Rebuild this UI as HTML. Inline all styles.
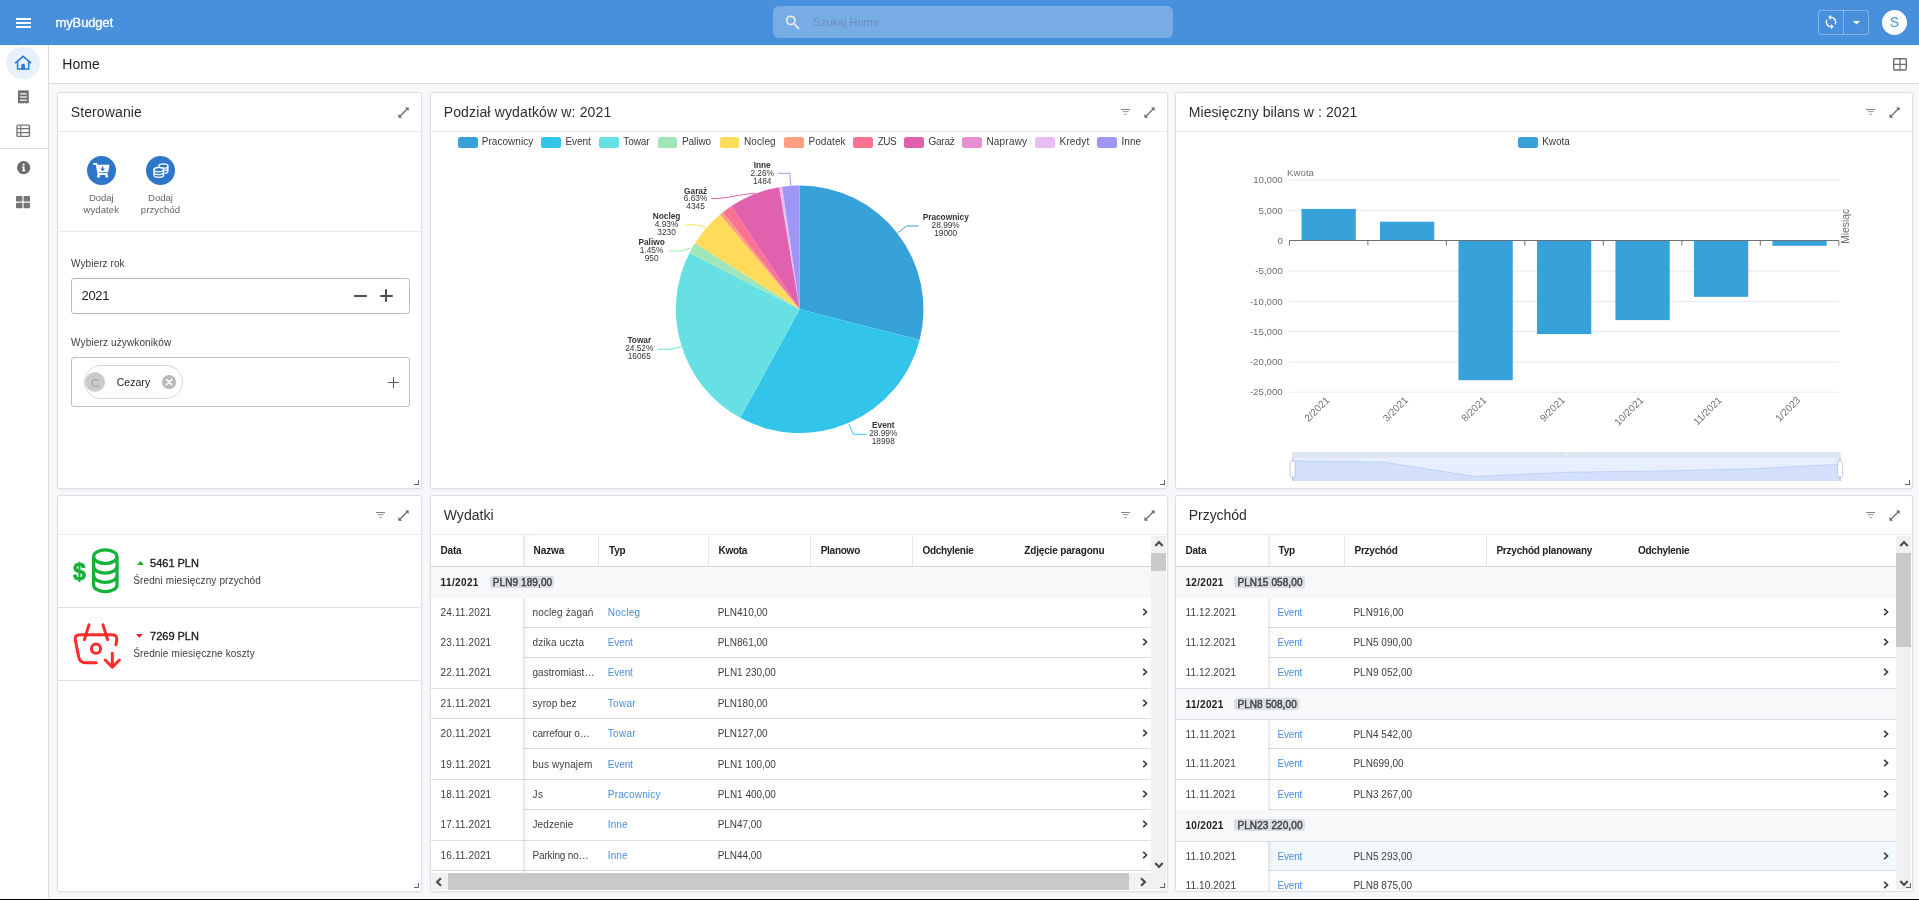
<!DOCTYPE html><html lang="pl"><head><meta charset="utf-8"><title>myBudget - Home</title><style>
*{box-sizing:border-box;margin:0;padding:0}
html,body{width:1919px;height:900px;overflow:hidden;background:#f7f8fa;font-family:"Liberation Sans",sans-serif;}
.t{position:absolute;white-space:nowrap;}
.a{position:absolute;}
.card{position:absolute;background:#fff;border:1px solid #dcdfe5;border-radius:2.5px;box-shadow:0 1px 3px rgba(60,64,80,0.07);}
.hl{position:absolute;height:1px;background:#ebecef;}
.vl{position:absolute;width:1px;background:#e4e6ea;}
svg{position:absolute;overflow:visible;}
.rs{position:absolute;width:5px;height:5px;border-right:1px solid #5f6368;border-bottom:1px solid #5f6368;}
</style></head><body><div id="root" style="position:absolute;left:0;top:0;width:1919px;height:900px;overflow:hidden;will-change:transform;">
<div class="a" style="left:0;top:0;width:1919px;height:45px;background:#4990dc;border-bottom:1px solid #4189da;"></div>
<div class="a" style="left:16px;top:18px;width:15px;height:2px;background:#fff;"></div>
<div class="a" style="left:16px;top:22px;width:15px;height:2px;background:#fff;"></div>
<div class="a" style="left:16px;top:26px;width:15px;height:2px;background:#fff;"></div>
<span class="t" style="top:16.00px;font-size:13px;line-height:13px;color:#fff;letter-spacing:-0.154px;left:55.60px;-webkit-text-stroke:0.3px #fff;">myBudget</span>
<div class="a" style="left:773px;top:6px;width:400px;height:31.6px;border-radius:6px;background:rgba(255,255,255,0.26);"></div>
<svg style="left:783px;top:13px" width="18" height="18" viewBox="0 0 18 18"><circle cx="7.8" cy="7.4" r="4.1" fill="none" stroke="#e9e9e6" stroke-width="1.8"/><path d="M10.9 10.6 L15.6 15.4" stroke="#e9e9e6" stroke-width="1.9" stroke-linecap="round"/></svg>
<span class="t" style="top:17.00px;font-size:11px;line-height:11px;color:#6d8fbd;letter-spacing:0.008px;left:813.30px;">Szukaj Home</span>
<div class="a" style="left:1818px;top:10px;width:51px;height:25px;border:1px solid rgba(255,255,255,0.32);border-radius:3px;"></div>
<div class="a" style="left:1843px;top:10px;width:1px;height:25px;background:rgba(255,255,255,0.32);"></div>
<svg style="left:1822.9px;top:14.2px" width="16" height="16" viewBox="0 0 24 24"><path fill="#fff" d="M12 4V1L8 5l4 4V6c3.31 0 6 2.69 6 6 0 1.01-.25 1.97-.7 2.8l1.46 1.46C19.54 15.03 20 13.57 20 12c0-4.42-3.58-8-8-8zm0 14c-3.31 0-6-2.69-6-6 0-1.01.25-1.97.7-2.8L5.24 7.74C4.46 8.97 4 10.43 4 12c0 4.42 3.58 8 8 8v3l4-4-4-4v3z"/></svg>
<svg style="left:1853px;top:20.5px" width="7" height="4" viewBox="0 0 7 4"><path d="M0 0 H7 L3.5 3.6 Z" fill="#fff"/></svg>
<div class="a" style="left:1882px;top:10px;width:25px;height:25px;border-radius:50%;background:#fff;"></div>
<span class="t" style="top:15.00px;font-size:14px;line-height:14px;color:#4990dc;left:1889.73px;">S</span>
<div class="a" style="left:0;top:45px;width:49px;height:854px;background:#fff;border-right:1px solid #d8dade;"></div>
<div class="a" style="left:5.8px;top:46.9px;width:34px;height:32.4px;border-radius:50%;background:#e8f0fb;"></div>
<svg style="left:0;top:0" width="60" height="160" viewBox="0 0 60 160"><g transform="translate(0 0.5)"><path d="M15.7 62.1 L23.1 55.9 L30.5 62.1" fill="none" stroke="#2e7bd6" stroke-width="1.7" stroke-linejoin="miter" stroke-linecap="round"/><path d="M17.6 61 V68.6 H28.7 V61" fill="none" stroke="#2e7bd6" stroke-width="1.5"/><path d="M21.2 69.2 V64.9 a1.9 1.6 0 0 1 3.8 0 V69.2 Z" fill="#2e7bd6"/></g><path d="M18 89.9 l1.35 0.9 l1.35 -0.9 l1.35 0.9 l1.35 -0.9 l1.35 0.9 l1.35 -0.9 l1.35 0.9 l1.3 -0.9 V103.7 l-1.3 -0.9 l-1.35 0.9 l-1.35 -0.9 l-1.35 0.9 l-1.35 -0.9 l-1.35 0.9 l-1.35 -0.9 l-1.35 0.9 Z" fill="#707070"/><rect x="19.9" y="93.3" width="6.9" height="1.2" fill="#fff"/><rect x="19.9" y="96.4" width="6.9" height="1.2" fill="#fff"/><rect x="19.9" y="99.6" width="6.9" height="1.2" fill="#fff"/><rect x="17" y="125.1" width="12.4" height="11.3" rx="1.2" fill="none" stroke="#757575" stroke-width="1.4"/><path d="M17 128.7 H29.4 M17 132.6 H29.4 M20.7 125.1 V136.4" stroke="#757575" stroke-width="1.2" fill="none"/></svg>
<div class="a" style="left:0;top:148px;width:48px;height:1px;background:#dcdee2;"></div>
<svg style="left:16.5px;top:161.1px" width="13.3" height="13.3" viewBox="0 0 14 14"><circle cx="7" cy="7" r="7" fill="#6b6b6b"/><rect x="6.1" y="6" width="1.9" height="4.6" fill="#fff"/><rect x="5.3" y="6" width="2" height="1.1" fill="#fff"/><rect x="5.3" y="9.7" width="3.6" height="1.1" fill="#fff"/><circle cx="7" cy="3.9" r="1.15" fill="#fff"/></svg>
<svg style="left:16.2px;top:195.5px" width="14" height="12.3" viewBox="0 0 15 13" preserveAspectRatio="none"><rect x="0" y="0" width="6.9" height="5.9" rx="0.8" fill="#757575"/><rect x="8.1" y="0" width="6.9" height="5.9" rx="0.8" fill="#757575"/><rect x="0" y="7.1" width="6.9" height="5.9" rx="0.8" fill="#757575"/><rect x="8.1" y="7.1" width="6.9" height="5.9" rx="0.8" fill="#757575"/></svg>
<div class="a" style="left:49px;top:45px;width:1870px;height:39px;background:#fff;border-bottom:1px solid #d8dbe0;"></div>
<span class="t" style="top:57.00px;font-size:14px;line-height:14px;color:#202124;letter-spacing:0.063px;left:62.30px;">Home</span>
<svg style="left:1893px;top:58.3px" width="14" height="13" viewBox="0 0 14 13"><rect x="0.7" y="0.7" width="12.6" height="11.3" rx="1" fill="none" stroke="#6f6f6f" stroke-width="1.4"/><path d="M7 0.7 V12 M0.7 6.35 H13.3" stroke="#6f6f6f" stroke-width="1.3"/></svg>
<div class="card" style="left:57px;top:92px;width:365px;height:397px;"></div>
<div class="hl" style="left:58px;top:131px;width:363px;"></div>
<span class="t" style="top:105.00px;font-size:14px;line-height:14px;color:#2b2f33;letter-spacing:0.126px;left:70.70px;">Sterowanie</span>
<svg style="left:397.6px;top:106.9px" width="11.1" height="11.1" viewBox="0 0 10.6 10.6"><path d="M1.8 8.8 L8.8 1.8" stroke="#666" stroke-width="1.3" fill="none"/><path d="M6.7 0.4 H10.2 V3.9 Z" fill="#666"/><path d="M0.4 6.7 V10.2 H3.9 Z" fill="#666"/></svg>
<div class="rs" style="left:414px;top:480px;"></div>
<div class="card" style="left:430px;top:92px;width:738px;height:397px;"></div>
<div class="hl" style="left:431px;top:131px;width:736px;"></div>
<span class="t" style="top:105.00px;font-size:14px;line-height:14px;color:#2b2f33;letter-spacing:0.146px;left:443.70px;">Podział wydatków w: 2021</span>
<svg style="left:1143.6px;top:106.9px" width="11.1" height="11.1" viewBox="0 0 10.6 10.6"><path d="M1.8 8.8 L8.8 1.8" stroke="#666" stroke-width="1.3" fill="none"/><path d="M6.7 0.4 H10.2 V3.9 Z" fill="#666"/><path d="M0.4 6.7 V10.2 H3.9 Z" fill="#666"/></svg>
<svg style="left:1121.1px;top:108.95px" width="10" height="7" viewBox="0 0 10 7"><path d="M0.1 0.5 H9 " stroke="#7a7a7a" stroke-width="0.95" fill="none"/><path d="M1.8 2.65 H7.6" stroke="#8a8a8a" stroke-width="0.95" fill="none"/><path d="M3.1 5.35 H5.9" stroke="#999" stroke-width="0.95" fill="none"/></svg>
<div class="rs" style="left:1160px;top:480px;"></div>
<div class="card" style="left:1175px;top:92px;width:738px;height:397px;"></div>
<div class="hl" style="left:1176px;top:131px;width:736px;"></div>
<span class="t" style="top:105.00px;font-size:14px;line-height:14px;color:#2b2f33;letter-spacing:0.084px;left:1188.70px;">Miesięczny bilans w : 2021</span>
<svg style="left:1888.6px;top:106.9px" width="11.1" height="11.1" viewBox="0 0 10.6 10.6"><path d="M1.8 8.8 L8.8 1.8" stroke="#666" stroke-width="1.3" fill="none"/><path d="M6.7 0.4 H10.2 V3.9 Z" fill="#666"/><path d="M0.4 6.7 V10.2 H3.9 Z" fill="#666"/></svg>
<svg style="left:1866.1px;top:108.95px" width="10" height="7" viewBox="0 0 10 7"><path d="M0.1 0.5 H9 " stroke="#7a7a7a" stroke-width="0.95" fill="none"/><path d="M1.8 2.65 H7.6" stroke="#8a8a8a" stroke-width="0.95" fill="none"/><path d="M3.1 5.35 H5.9" stroke="#999" stroke-width="0.95" fill="none"/></svg>
<div class="rs" style="left:1905px;top:480px;"></div>
<div class="card" style="left:57px;top:495px;width:365px;height:397px;"></div>
<div class="hl" style="left:58px;top:534px;width:363px;"></div>
<svg style="left:397.6px;top:509.9px" width="11.1" height="11.1" viewBox="0 0 10.6 10.6"><path d="M1.8 8.8 L8.8 1.8" stroke="#666" stroke-width="1.3" fill="none"/><path d="M6.7 0.4 H10.2 V3.9 Z" fill="#666"/><path d="M0.4 6.7 V10.2 H3.9 Z" fill="#666"/></svg>
<svg style="left:376.2px;top:511.95px" width="10" height="7" viewBox="0 0 10 7"><path d="M0.1 0.5 H9 " stroke="#7a7a7a" stroke-width="0.95" fill="none"/><path d="M1.8 2.65 H7.6" stroke="#8a8a8a" stroke-width="0.95" fill="none"/><path d="M3.1 5.35 H5.9" stroke="#999" stroke-width="0.95" fill="none"/></svg>
<div class="rs" style="left:414px;top:883px;"></div>
<div class="card" style="left:430px;top:495px;width:738px;height:397px;"></div>
<div class="hl" style="left:431px;top:534px;width:736px;"></div>
<span class="t" style="top:508.00px;font-size:14px;line-height:14px;color:#2b2f33;letter-spacing:0.062px;left:443.70px;">Wydatki</span>
<svg style="left:1143.6px;top:509.9px" width="11.1" height="11.1" viewBox="0 0 10.6 10.6"><path d="M1.8 8.8 L8.8 1.8" stroke="#666" stroke-width="1.3" fill="none"/><path d="M6.7 0.4 H10.2 V3.9 Z" fill="#666"/><path d="M0.4 6.7 V10.2 H3.9 Z" fill="#666"/></svg>
<svg style="left:1121.1px;top:511.95px" width="10" height="7" viewBox="0 0 10 7"><path d="M0.1 0.5 H9 " stroke="#7a7a7a" stroke-width="0.95" fill="none"/><path d="M1.8 2.65 H7.6" stroke="#8a8a8a" stroke-width="0.95" fill="none"/><path d="M3.1 5.35 H5.9" stroke="#999" stroke-width="0.95" fill="none"/></svg>
<div class="rs" style="left:1160px;top:883px;"></div>
<div class="card" style="left:1175px;top:495px;width:738px;height:397px;"></div>
<div class="hl" style="left:1176px;top:534px;width:736px;"></div>
<span class="t" style="top:508.00px;font-size:14px;line-height:14px;color:#2b2f33;letter-spacing:-0.020px;left:1188.70px;">Przychód</span>
<svg style="left:1888.6px;top:509.9px" width="11.1" height="11.1" viewBox="0 0 10.6 10.6"><path d="M1.8 8.8 L8.8 1.8" stroke="#666" stroke-width="1.3" fill="none"/><path d="M6.7 0.4 H10.2 V3.9 Z" fill="#666"/><path d="M0.4 6.7 V10.2 H3.9 Z" fill="#666"/></svg>
<svg style="left:1866.1px;top:511.95px" width="10" height="7" viewBox="0 0 10 7"><path d="M0.1 0.5 H9 " stroke="#7a7a7a" stroke-width="0.95" fill="none"/><path d="M1.8 2.65 H7.6" stroke="#8a8a8a" stroke-width="0.95" fill="none"/><path d="M3.1 5.35 H5.9" stroke="#999" stroke-width="0.95" fill="none"/></svg>
<div class="rs" style="left:1905px;top:883px;"></div>
<div class="a" style="left:87.0px;top:156px;width:29px;height:29px;border-radius:50%;background:#2e77c8;"></div>
<div class="a" style="left:146.0px;top:156px;width:29px;height:29px;border-radius:50%;background:#2e77c8;"></div>
<svg style="left:92.9px;top:163.1px" width="16.5" height="14.7" viewBox="0 0 576 512"><path fill="#fff" d="M504.717 320H211.572l6.545 32h268.418c15.401 0 26.816 14.301 23.403 29.319l-5.517 24.276C523.112 414.668 536 433.828 536 456c0 31.202-25.519 56.444-56.824 55.994-29.823-.429-54.35-24.631-55.155-54.447-.44-16.287 6.085-31.049 16.803-41.548H231.176C241.553 426.165 248 440.326 248 456c0 31.813-26.528 57.431-58.67 55.938-28.54-1.325-51.751-24.385-53.251-52.917-1.158-22.034 10.436-41.455 28.051-51.586L93.883 64H24C10.745 64 0 53.255 0 40V24C0 10.745 10.745 0 24 0h102.529c11.401 0 21.228 8.021 23.513 19.19L159.208 64H551.99c15.401 0 26.816 14.301 23.403 29.319l-47.273 208C525.637 312.246 515.923 320 504.717 320zM403.029 192H360v-60c0-6.627-5.373-12-12-12h-24c-6.627 0-12 5.373-12 12v60h-43.029c-10.691 0-16.045 12.926-8.485 20.485l67.029 67.029c4.686 4.686 12.284 4.686 16.971 0l67.029-67.029c7.559-7.559 2.205-20.485-8.486-20.485z"/></svg>
<svg style="left:152.9px;top:162.6px" width="16" height="15" viewBox="0 0 16 15"><g fill="none" stroke="#fff" stroke-width="1.3"><ellipse cx="10.3" cy="3" rx="4.6" ry="2.2"/><path d="M14.9 3 V8.2 c0 1.2 -1.6 2 -3.3 2.2 M14.9 5.6 c0 1 -1.4 1.8 -3.2 2.1"/><ellipse cx="5.8" cy="6.6" rx="4.8" ry="2.3" fill="#2e77c8"/><path d="M1 6.6 V12 c0 1.3 2.1 2.3 4.8 2.3 s4.8 -1 4.8 -2.3 V6.6"  fill="#2e77c8"/><ellipse cx="5.8" cy="6.6" rx="4.8" ry="2.3"/><path d="M1 9.3 c0 1.3 2.1 2.3 4.8 2.3 s4.8 -1 4.8 -2.3"/></g></svg>
<span class="t" style="top:193.00px;font-size:9.5px;line-height:9.5px;color:#5f6368;left:88.90px;">Dodaj</span>
<span class="t" style="top:205.00px;font-size:9.5px;line-height:9.5px;color:#5f6368;letter-spacing:0.107px;left:83.50px;">wydatek</span>
<span class="t" style="top:193.00px;font-size:9.5px;line-height:9.5px;color:#5f6368;left:148.10px;">Dodaj</span>
<span class="t" style="top:205.00px;font-size:9.5px;line-height:9.5px;color:#5f6368;letter-spacing:0.106px;left:140.80px;">przychód</span>
<div class="hl" style="left:58px;top:231px;width:363px;"></div>
<span class="t" style="top:259.00px;font-size:10px;line-height:10px;color:#3c4043;letter-spacing:0.073px;left:71.10px;">Wybierz rok</span>
<div class="a" style="left:71px;top:278px;width:339px;height:36px;border:1px solid #b4bac4;border-radius:3px;background:#fff;"></div>
<span class="t" style="top:289.00px;font-size:13px;line-height:13px;color:#202124;letter-spacing:-0.380px;left:81.60px;">2021</span>
<div class="a" style="left:353.5px;top:294.8px;width:13px;height:1.9px;background:#4a4f55;border-radius:1px;"></div>
<div class="a" style="left:379.7px;top:294.8px;width:13px;height:1.9px;background:#4a4f55;border-radius:1px;"></div>
<div class="a" style="left:385.2px;top:289.3px;width:1.9px;height:13px;background:#4a4f55;border-radius:1px;"></div>
<span class="t" style="top:338.00px;font-size:10px;line-height:10px;color:#3c4043;letter-spacing:0.131px;left:71.10px;">Wybierz używkoników</span>
<div class="a" style="left:71px;top:357px;width:339px;height:50px;border:1px solid #bdbfc4;border-radius:3px;background:#fff;"></div>
<div class="a" style="left:84px;top:365px;width:99px;height:34px;border:1px solid #d4d8e0;border-radius:17px;background:#fff;"></div>
<div class="a" style="left:85.2px;top:372.4px;width:20px;height:20px;border-radius:50%;background:#cbcbcb;"></div>
<span class="t" style="top:378.00px;font-size:11.5px;line-height:11.5px;color:#9c9c9c;left:91.05px;">C</span>
<span class="t" style="top:377.00px;font-size:10.5px;line-height:10.5px;color:#202124;letter-spacing:0.040px;left:116.70px;">Cezary</span>
<svg style="left:161.8px;top:374.6px" width="14.2" height="14.2" viewBox="0 0 14 14"><circle cx="7" cy="7" r="7" fill="#b9b9b9"/><path d="M4.3 4.3 L9.7 9.7 M9.7 4.3 L4.3 9.7" stroke="#fff" stroke-width="1.5" stroke-linecap="round"/></svg>
<div class="a" style="left:387.8px;top:381.8px;width:11.4px;height:1.1px;background:#5a5a5a;"></div>
<div class="a" style="left:392.95px;top:376.6px;width:1.1px;height:11.4px;background:#5a5a5a;"></div>
<div class="hl" style="left:58px;top:607px;width:363px;background:#dfe1e5"></div>
<div class="hl" style="left:58px;top:680px;width:363px;background:#dfe1e5"></div>
<span class="t" style="top:561.00px;font-size:23px;line-height:23px;color:#12b23b;font-weight:bold;left:73.00px;-webkit-text-stroke:0.7px #12b23b;">$</span>
<svg style="left:0;top:0" width="200" height="700" viewBox="0 0 200 700"><g fill="none" stroke="#12b23b" stroke-width="3.2"><ellipse cx="105.3" cy="556.7" rx="11.7" ry="6.8"/><path d="M93.6 556.7 V584.9 a11.7 6.8 0 0 0 23.4 0 V556.7"/><path d="M93.6 566.3 a11.7 6.8 0 0 0 23.4 0"/><path d="M93.6 575.6 a11.7 6.8 0 0 0 23.4 0"/></g></svg>
<svg style="left:136.6px;top:561px" width="6.8" height="4" viewBox="0 0 7 4"><path d="M3.5 0 L7 4 H0 Z" fill="#14b01c"/></svg>
<span class="t" style="top:558.00px;font-size:11px;line-height:11px;color:#202124;letter-spacing:-0.016px;left:150.10px;-webkit-text-stroke:0.35px #202124;">5461 PLN</span>
<span class="t" style="top:576.00px;font-size:10px;line-height:10px;color:#3c4043;letter-spacing:0.127px;left:133.20px;">Średni miesięczny przychód</span>
<svg style="left:0;top:0" width="200" height="700" viewBox="0 0 200 700"><g fill="none" stroke="#ff2a2a" stroke-width="3" stroke-linecap="round" stroke-linejoin="round"><path d="M89 624.9 L84.4 639.6"/><path d="M103 624.9 L107.6 639.6"/><path d="M96.2 662.7 H85.5 C81.5 662.7 79.3 660.6 78.7 657 L75.3 639.6 C74.8 636.4 76.6 634.7 79.6 634.7 H112 C115.4 634.7 117.1 636.6 116.7 639.8 L116 644.7"/><circle cx="96" cy="648.7" r="4.6"/><path d="M112.3 653.2 V667 M105.2 660 L112.3 667.2 L119.4 660"/></g></svg>
<svg style="left:136.4px;top:634.3px" width="6.8" height="3.8" viewBox="0 0 7 4"><path d="M0 0 H7 L3.5 4 Z" fill="#dc1620"/></svg>
<span class="t" style="top:631.00px;font-size:11px;line-height:11px;color:#202124;letter-spacing:-0.016px;left:150.10px;-webkit-text-stroke:0.35px #202124;">7269 PLN</span>
<span class="t" style="top:649.00px;font-size:10px;line-height:10px;color:#3c4043;letter-spacing:0.129px;left:133.20px;">Średnie miesięczne koszty</span>
<div class="a" style="left:457.8px;top:136.6px;width:19.8px;height:11px;border-radius:2.5px;background:#37A2DA;"></div>
<span class="t" style="top:137.00px;font-size:10px;line-height:10px;color:#3a3a3a;letter-spacing:0.057px;left:481.70px;">Pracownicy</span>
<div class="a" style="left:541.3px;top:136.6px;width:19.8px;height:11px;border-radius:2.5px;background:#32C5E9;"></div>
<span class="t" style="top:137.00px;font-size:10px;line-height:10px;color:#3a3a3a;letter-spacing:-0.074px;left:565.50px;">Event</span>
<div class="a" style="left:598.9px;top:136.6px;width:19.8px;height:11px;border-radius:2.5px;background:#67E0E3;"></div>
<span class="t" style="top:137.00px;font-size:10px;line-height:10px;color:#3a3a3a;letter-spacing:-0.075px;left:623.30px;">Towar</span>
<div class="a" style="left:657.6px;top:136.6px;width:19.8px;height:11px;border-radius:2.5px;background:#9FE6B8;"></div>
<span class="t" style="top:137.00px;font-size:10px;line-height:10px;color:#3a3a3a;letter-spacing:-0.060px;left:682.00px;">Paliwo</span>
<div class="a" style="left:719.5px;top:136.6px;width:19.8px;height:11px;border-radius:2.5px;background:#FFDB5C;"></div>
<span class="t" style="top:137.00px;font-size:10px;line-height:10px;color:#3a3a3a;letter-spacing:0.129px;left:743.90px;">Nocleg</span>
<div class="a" style="left:784.3px;top:136.6px;width:19.8px;height:11px;border-radius:2.5px;background:#ff9f7f;"></div>
<span class="t" style="top:137.00px;font-size:10px;line-height:10px;color:#3a3a3a;letter-spacing:0.086px;left:808.40px;">Podatek</span>
<div class="a" style="left:853.4px;top:136.6px;width:19.8px;height:11px;border-radius:2.5px;background:#fb7293;"></div>
<span class="t" style="top:137.00px;font-size:10px;line-height:10px;color:#3a3a3a;letter-spacing:-0.600px;left:877.80px;">ZUS</span>
<div class="a" style="left:904.4px;top:136.6px;width:19.8px;height:11px;border-radius:2.5px;background:#E062AE;"></div>
<span class="t" style="top:137.00px;font-size:10px;line-height:10px;color:#3a3a3a;letter-spacing:-0.246px;left:928.50px;">Garaż</span>
<div class="a" style="left:962.2px;top:136.6px;width:19.8px;height:11px;border-radius:2.5px;background:#E690D1;"></div>
<span class="t" style="top:137.00px;font-size:10px;line-height:10px;color:#3a3a3a;letter-spacing:0.206px;left:986.40px;">Naprawy</span>
<div class="a" style="left:1035.2px;top:136.6px;width:19.8px;height:11px;border-radius:2.5px;background:#e7bcf3;"></div>
<span class="t" style="top:137.00px;font-size:10px;line-height:10px;color:#3a3a3a;letter-spacing:0.133px;left:1059.60px;">Kredyt</span>
<div class="a" style="left:1097.3px;top:136.6px;width:19.8px;height:11px;border-radius:2.5px;background:#9d96f5;"></div>
<span class="t" style="top:137.00px;font-size:10px;line-height:10px;color:#3a3a3a;letter-spacing:0.059px;left:1121.50px;">Inne</span>
<svg style="left:0;top:0" width="1919" height="900" viewBox="0 0 1919 900"><path d="M799.7 309.3 L799.70 185.50 A123.8 123.8 0 0 1 919.63 340.01 Z" fill="#37A2DA"/><path d="M799.7 309.3 L919.63 340.01 A123.8 123.8 0 0 1 740.20 417.86 Z" fill="#32C5E9"/><path d="M799.7 309.3 L740.20 417.86 A123.8 123.8 0 0 1 689.39 253.10 Z" fill="#67E0E3"/><path d="M799.7 309.3 L689.39 253.10 A123.8 123.8 0 0 1 694.96 243.29 Z" fill="#9FE6B8"/><path d="M799.7 309.3 L694.96 243.29 A123.8 123.8 0 0 1 720.07 214.51 Z" fill="#FFDB5C"/><path d="M799.7 309.3 L720.07 214.51 A123.8 123.8 0 0 1 722.90 212.20 Z" fill="#ff9f7f"/><path d="M799.7 309.3 L722.90 212.20 A123.8 123.8 0 0 1 731.47 206.00 Z" fill="#fb7293"/><path d="M799.7 309.3 L731.47 206.00 A123.8 123.8 0 0 1 779.11 187.23 Z" fill="#E062AE"/><path d="M799.7 309.3 L779.11 187.23 A123.8 123.8 0 0 1 779.72 187.12 Z" fill="#E690D1"/><path d="M799.7 309.3 L779.72 187.12 A123.8 123.8 0 0 1 782.18 186.75 Z" fill="#e7bcf3"/><path d="M799.7 309.3 L782.18 186.75 A123.8 123.8 0 0 1 799.70 185.50 Z" fill="#9d96f5"/><path d="M897.9 232.8 L906.5 226.0 L918.5 226.0" fill="none" stroke="#37A2DA" stroke-width="1"/><path d="M848.9 424.2 L853.3 434.3 L866.7 434.3" fill="none" stroke="#32C5E9" stroke-width="1"/><path d="M681.0 346.7 L670.7 349.3 L658.3 349.3" fill="none" stroke="#67E0E3" stroke-width="1"/><path d="M691.1 247.8 L680.4 251.0 L668.9 251.0" fill="none" stroke="#9FE6B8" stroke-width="1"/><path d="M706.2 227.4 L696.4 224.9 L684.9 224.9" fill="none" stroke="#FFDB5C" stroke-width="1"/><path d="M755.1 193.2 C 738 194.5 728 198.6 711.2 198.6" fill="none" stroke="#E062AE" stroke-width="1"/><path d="M790.7 185.6 L789.8 173.3 L778.2 173.3" fill="none" stroke="#9d96f5" stroke-width="1"/></svg>
<span class="t" style="top:213.00px;font-size:8.3px;line-height:8.3px;color:#333;font-weight:bold;left:922.63px;">Pracownicy</span>
<span class="t" style="top:221.00px;font-size:8.3px;line-height:8.3px;color:#333;left:931.62px;">28.99%</span>
<span class="t" style="top:229.00px;font-size:8.3px;line-height:8.3px;color:#333;left:934.16px;">19000</span>
<span class="t" style="top:421.00px;font-size:8.3px;line-height:8.3px;color:#333;font-weight:bold;left:872.00px;">Event</span>
<span class="t" style="top:429.00px;font-size:8.3px;line-height:8.3px;color:#333;left:869.22px;">28.99%</span>
<span class="t" style="top:437.00px;font-size:8.3px;line-height:8.3px;color:#333;left:871.76px;">18998</span>
<span class="t" style="top:336.00px;font-size:8.3px;line-height:8.3px;color:#333;font-weight:bold;left:627.39px;">Towar</span>
<span class="t" style="top:344.00px;font-size:8.3px;line-height:8.3px;color:#333;left:625.22px;">24.52%</span>
<span class="t" style="top:352.00px;font-size:8.3px;line-height:8.3px;color:#333;left:627.76px;">16065</span>
<span class="t" style="top:238.00px;font-size:8.3px;line-height:8.3px;color:#333;font-weight:bold;left:638.45px;">Paliwo</span>
<span class="t" style="top:246.00px;font-size:8.3px;line-height:8.3px;color:#333;left:639.83px;">1.45%</span>
<span class="t" style="top:254.00px;font-size:8.3px;line-height:8.3px;color:#333;left:644.68px;">950</span>
<span class="t" style="top:212.00px;font-size:8.3px;line-height:8.3px;color:#333;font-weight:bold;left:652.76px;">Nocleg</span>
<span class="t" style="top:220.00px;font-size:8.3px;line-height:8.3px;color:#333;left:654.83px;">4.93%</span>
<span class="t" style="top:228.00px;font-size:8.3px;line-height:8.3px;color:#333;left:657.37px;">3230</span>
<span class="t" style="top:187.00px;font-size:8.3px;line-height:8.3px;color:#333;font-weight:bold;left:684.07px;">Garaż</span>
<span class="t" style="top:194.00px;font-size:8.3px;line-height:8.3px;color:#333;left:683.83px;">6.63%</span>
<span class="t" style="top:202.00px;font-size:8.3px;line-height:8.3px;color:#333;left:686.37px;">4345</span>
<span class="t" style="top:161.00px;font-size:8.3px;line-height:8.3px;color:#333;font-weight:bold;left:753.67px;">Inne</span>
<span class="t" style="top:169.00px;font-size:8.3px;line-height:8.3px;color:#333;left:750.43px;">2.26%</span>
<span class="t" style="top:177.00px;font-size:8.3px;line-height:8.3px;color:#333;left:752.97px;">1484</span>
<svg style="left:0;top:0" width="1919" height="900" viewBox="0 0 1919 900" font-family="Liberation Sans, sans-serif"><path d="M1289.4 180.20 H1838.8" stroke="#e4e9f3" stroke-width="1"/><path d="M1289.4 210.49 H1838.8" stroke="#e4e9f3" stroke-width="1"/><path d="M1289.4 271.07 H1838.8" stroke="#e4e9f3" stroke-width="1"/><path d="M1289.4 301.36 H1838.8" stroke="#e4e9f3" stroke-width="1"/><path d="M1289.4 331.65 H1838.8" stroke="#e4e9f3" stroke-width="1"/><path d="M1289.4 361.94 H1838.8" stroke="#e4e9f3" stroke-width="1"/><path d="M1289.4 392.23 H1838.8" stroke="#e4e9f3" stroke-width="1"/><rect x="1301.50" y="208.90" width="54.3" height="31.60" fill="#37A2DA"/><rect x="1379.99" y="221.72" width="54.3" height="18.78" fill="#37A2DA"/><rect x="1458.47" y="240.50" width="54.3" height="139.70" fill="#37A2DA"/><rect x="1536.96" y="240.50" width="54.3" height="93.60" fill="#37A2DA"/><rect x="1615.44" y="240.50" width="54.3" height="79.60" fill="#37A2DA"/><rect x="1693.93" y="240.50" width="54.3" height="56.34" fill="#37A2DA"/><rect x="1772.41" y="240.50" width="54.3" height="5.27" fill="#37A2DA"/><path d="M1289.4 240.5 H1838.8" stroke="#6e7079" stroke-width="1"/><path d="M1289.40 240.5 V245.5" stroke="#6e7079" stroke-width="1"/><path d="M1367.89 240.5 V245.5" stroke="#6e7079" stroke-width="1"/><path d="M1446.37 240.5 V245.5" stroke="#6e7079" stroke-width="1"/><path d="M1524.86 240.5 V245.5" stroke="#6e7079" stroke-width="1"/><path d="M1603.34 240.5 V245.5" stroke="#6e7079" stroke-width="1"/><path d="M1681.83 240.5 V245.5" stroke="#6e7079" stroke-width="1"/><path d="M1760.31 240.5 V245.5" stroke="#6e7079" stroke-width="1"/><path d="M1838.80 240.5 V245.5" stroke="#6e7079" stroke-width="1"/><rect x="1292.2" y="452" width="548.4" height="29" fill="#e7eefd"/><path d="M1292.2 461.0 L1383.6 462.2 L1475.0 476.5 L1566.4 472.3 L1657.8 471.1 L1749.2 469.0 L1840.6 464.3 L1840.6 481 L1292.2 481 Z" fill="#d4e0fb"/><path d="M1292.2 461.0 L1383.6 462.2 L1475.0 476.5 L1566.4 472.3 L1657.8 471.1 L1749.2 469.0 L1840.6 464.3" fill="none" stroke="#bfd1f8" stroke-width="1"/><rect x="1292.2" y="452" width="548.4" height="5.8" fill="#dfe4f3"/><path d="M1292.7 457.8 V481 M1840.1 457.8 V481" stroke="#a9b8de" stroke-width="1"/><rect x="1290.2" y="461" width="5" height="16" rx="1.5" fill="#fff" stroke="#b3bfdc" stroke-width="0.8"/><rect x="1837.6" y="461" width="5" height="16" rx="1.5" fill="#fff" stroke="#b3bfdc" stroke-width="0.8"/><path d="M1564.5 454.8 H1565.5 M1566.2 454.8 H1567.2 M1567.9 454.8 H1568.9" stroke="#fff" stroke-width="1.6" opacity="0.8"/><text x="1327.74" y="401.70" text-anchor="end" font-size="10" fill="#6e7079" transform="rotate(-45 1327.74 398.30)">2/2021</text><text x="1406.23" y="401.70" text-anchor="end" font-size="10" fill="#6e7079" transform="rotate(-45 1406.23 398.30)">3/2021</text><text x="1484.71" y="401.70" text-anchor="end" font-size="10" fill="#6e7079" transform="rotate(-45 1484.71 398.30)">8/2021</text><text x="1563.20" y="401.70" text-anchor="end" font-size="10" fill="#6e7079" transform="rotate(-45 1563.20 398.30)">9/2021</text><text x="1641.69" y="401.70" text-anchor="end" font-size="10" fill="#6e7079" transform="rotate(-45 1641.69 398.30)">10/2021</text><text x="1720.17" y="401.70" text-anchor="end" font-size="10" fill="#6e7079" transform="rotate(-45 1720.17 398.30)">11/2021</text><text x="1798.66" y="401.70" text-anchor="end" font-size="10" fill="#6e7079" transform="rotate(-45 1798.66 398.30)">1/2023</text><text x="0" y="0" font-size="10.3" fill="#6e7079" text-anchor="middle" transform="translate(1849 226.4) rotate(-90)">Miesiąc</text></svg>
<span class="t" style="top:175.00px;font-size:9.7px;line-height:9.7px;color:#6e7079;left:1253.13px;">10,000</span>
<span class="t" style="top:206.00px;font-size:9.7px;line-height:9.7px;color:#6e7079;left:1258.53px;">5,000</span>
<span class="t" style="top:236.00px;font-size:9.7px;line-height:9.7px;color:#6e7079;left:1277.41px;">0</span>
<span class="t" style="top:266.00px;font-size:9.7px;line-height:9.7px;color:#6e7079;left:1255.30px;">-5,000</span>
<span class="t" style="top:297.00px;font-size:9.7px;line-height:9.7px;color:#6e7079;left:1249.90px;">-10,000</span>
<span class="t" style="top:327.00px;font-size:9.7px;line-height:9.7px;color:#6e7079;left:1249.90px;">-15,000</span>
<span class="t" style="top:357.00px;font-size:9.7px;line-height:9.7px;color:#6e7079;left:1249.90px;">-20,000</span>
<span class="t" style="top:387.00px;font-size:9.7px;line-height:9.7px;color:#6e7079;left:1249.90px;">-25,000</span>
<span class="t" style="top:168.00px;font-size:9.7px;line-height:9.7px;color:#6e7079;letter-spacing:0.048px;left:1286.90px;">Kwota</span>
<div class="a" style="left:1517.8px;top:136.6px;width:20px;height:11px;border-radius:2.5px;background:#37A2DA;"></div>
<span class="t" style="top:137.00px;font-size:10px;line-height:10px;color:#3a3a3a;letter-spacing:-0.059px;left:1542.20px;">Kwota</span>
<div class="a" style="left:431px;top:567px;width:720px;height:31px;background:#f7f8fa;"></div>
<div class="hl" style="left:431px;top:566px;width:720px;background:#d3d6dc;"></div>
<div class="vl" style="left:598px;top:536px;height:30px;background:#e6e8eb;"></div>
<div class="vl" style="left:708px;top:536px;height:30px;background:#e6e8eb;"></div>
<div class="vl" style="left:810px;top:536px;height:30px;background:#e6e8eb;"></div>
<div class="vl" style="left:912px;top:536px;height:30px;background:#e6e8eb;"></div>
<span class="t" style="top:546.00px;font-size:10px;line-height:10px;color:#202124;font-weight:bold;letter-spacing:-0.244px;left:440.60px;">Data</span>
<span class="t" style="top:546.00px;font-size:10px;line-height:10px;color:#202124;font-weight:bold;letter-spacing:-0.125px;left:533.60px;">Nazwa</span>
<span class="t" style="top:546.00px;font-size:10px;line-height:10px;color:#202124;font-weight:bold;letter-spacing:-0.212px;left:609.00px;">Typ</span>
<span class="t" style="top:546.00px;font-size:10px;line-height:10px;color:#202124;font-weight:bold;letter-spacing:-0.300px;left:718.50px;">Kwota</span>
<span class="t" style="top:546.00px;font-size:10px;line-height:10px;color:#202124;font-weight:bold;letter-spacing:-0.259px;left:820.70px;">Planowo</span>
<span class="t" style="top:546.00px;font-size:10px;line-height:10px;color:#202124;font-weight:bold;letter-spacing:-0.301px;left:922.50px;">Odchylenie</span>
<span class="t" style="top:546.00px;font-size:10px;line-height:10px;color:#202124;font-weight:bold;letter-spacing:-0.162px;left:1024.30px;">Zdjęcie paragonu</span>
<span class="t" style="top:578.00px;font-size:10px;line-height:10px;color:#202124;font-weight:bold;letter-spacing:0.372px;left:440.60px;">11/2021</span>
<div class="a" style="left:490.2px;top:576.3px;width:63.7px;height:11.6px;border-radius:3px;background:#dcdee1;"></div>
<span class="t" style="top:578.00px;font-size:10px;line-height:10px;color:#3c4043;letter-spacing:0.093px;left:492.80px;-webkit-text-stroke:0.4px #3c4043;">PLN9 189,00</span>
<div class="hl" style="left:523px;top:627px;width:628px;background:#dadde3;"></div>
<span class="t" style="top:608.00px;font-size:10px;line-height:10px;color:#3c4043;letter-spacing:0.139px;left:440.60px;">24.11.2021</span>
<span class="t" style="top:608.00px;font-size:10px;line-height:10px;color:#3c4043;letter-spacing:0.126px;left:532.50px;">nocleg żagań</span>
<span class="t" style="top:608.00px;font-size:10px;line-height:10px;color:#4a8fdd;letter-spacing:0.212px;left:607.80px;">Nocleg</span>
<span class="t" style="top:608.00px;font-size:10px;line-height:10px;color:#3c4043;letter-spacing:-0.027px;left:717.70px;">PLN410,00</span>
<svg style="left:1141.9px;top:607.9px" width="6" height="8" viewBox="0 0 6 8"><path d="M1.2 0.9 L4.5 4 L1.2 7.1" fill="none" stroke="#3c4043" stroke-width="1.7"/></svg>
<div class="hl" style="left:523px;top:657px;width:628px;background:#dadde3;"></div>
<span class="t" style="top:638.00px;font-size:10px;line-height:10px;color:#3c4043;letter-spacing:0.139px;left:440.60px;">23.11.2021</span>
<span class="t" style="top:638.00px;font-size:10px;line-height:10px;color:#3c4043;letter-spacing:0.152px;left:532.50px;">dzika uczta</span>
<span class="t" style="top:638.00px;font-size:10px;line-height:10px;color:#4a8fdd;letter-spacing:-0.134px;left:607.80px;">Event</span>
<span class="t" style="top:638.00px;font-size:10px;line-height:10px;color:#3c4043;letter-spacing:-0.027px;left:717.70px;">PLN861,00</span>
<svg style="left:1141.9px;top:637.9px" width="6" height="8" viewBox="0 0 6 8"><path d="M1.2 0.9 L4.5 4 L1.2 7.1" fill="none" stroke="#3c4043" stroke-width="1.7"/></svg>
<div class="hl" style="left:431px;top:688px;width:720px;background:#dadde3;"></div>
<span class="t" style="top:668.00px;font-size:10px;line-height:10px;color:#3c4043;letter-spacing:0.139px;left:440.60px;">22.11.2021</span>
<span class="t" style="top:668.00px;font-size:10px;line-height:10px;color:#3c4043;letter-spacing:0.018px;left:532.50px;">gastromiast…</span>
<span class="t" style="top:668.00px;font-size:10px;line-height:10px;color:#4a8fdd;letter-spacing:-0.134px;left:607.80px;">Event</span>
<span class="t" style="top:668.00px;font-size:10px;line-height:10px;color:#3c4043;letter-spacing:-0.016px;left:717.70px;">PLN1 230,00</span>
<svg style="left:1141.9px;top:667.9px" width="6" height="8" viewBox="0 0 6 8"><path d="M1.2 0.9 L4.5 4 L1.2 7.1" fill="none" stroke="#3c4043" stroke-width="1.7"/></svg>
<div class="hl" style="left:431px;top:718px;width:720px;background:#dadde3;"></div>
<span class="t" style="top:699.00px;font-size:10px;line-height:10px;color:#3c4043;letter-spacing:0.139px;left:440.60px;">21.11.2021</span>
<span class="t" style="top:699.00px;font-size:10px;line-height:10px;color:#3c4043;letter-spacing:0.094px;left:532.50px;">syrop bez</span>
<span class="t" style="top:699.00px;font-size:10px;line-height:10px;color:#4a8fdd;letter-spacing:0.305px;left:607.80px;">Towar</span>
<span class="t" style="top:699.00px;font-size:10px;line-height:10px;color:#3c4043;letter-spacing:-0.027px;left:717.70px;">PLN180,00</span>
<svg style="left:1141.9px;top:698.9px" width="6" height="8" viewBox="0 0 6 8"><path d="M1.2 0.9 L4.5 4 L1.2 7.1" fill="none" stroke="#3c4043" stroke-width="1.7"/></svg>
<div class="hl" style="left:523px;top:748px;width:628px;background:#dadde3;"></div>
<span class="t" style="top:729.00px;font-size:10px;line-height:10px;color:#3c4043;letter-spacing:0.139px;left:440.60px;">20.11.2021</span>
<span class="t" style="top:729.00px;font-size:10px;line-height:10px;color:#3c4043;letter-spacing:-0.096px;left:532.50px;">carrefour o…</span>
<span class="t" style="top:729.00px;font-size:10px;line-height:10px;color:#4a8fdd;letter-spacing:0.305px;left:607.80px;">Towar</span>
<span class="t" style="top:729.00px;font-size:10px;line-height:10px;color:#3c4043;letter-spacing:-0.027px;left:717.70px;">PLN127,00</span>
<svg style="left:1141.9px;top:728.9px" width="6" height="8" viewBox="0 0 6 8"><path d="M1.2 0.9 L4.5 4 L1.2 7.1" fill="none" stroke="#3c4043" stroke-width="1.7"/></svg>
<div class="hl" style="left:431px;top:779px;width:720px;background:#dadde3;"></div>
<span class="t" style="top:760.00px;font-size:10px;line-height:10px;color:#3c4043;letter-spacing:0.139px;left:440.60px;">19.11.2021</span>
<span class="t" style="top:760.00px;font-size:10px;line-height:10px;color:#3c4043;letter-spacing:0.140px;left:532.50px;">bus wynajem</span>
<span class="t" style="top:760.00px;font-size:10px;line-height:10px;color:#4a8fdd;letter-spacing:-0.134px;left:607.80px;">Event</span>
<span class="t" style="top:760.00px;font-size:10px;line-height:10px;color:#3c4043;letter-spacing:-0.016px;left:717.70px;">PLN1 100,00</span>
<svg style="left:1141.9px;top:759.9px" width="6" height="8" viewBox="0 0 6 8"><path d="M1.2 0.9 L4.5 4 L1.2 7.1" fill="none" stroke="#3c4043" stroke-width="1.7"/></svg>
<div class="hl" style="left:523px;top:809px;width:628px;background:#dadde3;"></div>
<span class="t" style="top:790.00px;font-size:10px;line-height:10px;color:#3c4043;letter-spacing:0.139px;left:440.60px;">18.11.2021</span>
<span class="t" style="top:790.00px;font-size:10px;line-height:10px;color:#3c4043;letter-spacing:0.450px;left:532.50px;">Js</span>
<span class="t" style="top:790.00px;font-size:10px;line-height:10px;color:#4a8fdd;letter-spacing:0.167px;left:607.80px;">Pracownicy</span>
<span class="t" style="top:790.00px;font-size:10px;line-height:10px;color:#3c4043;letter-spacing:-0.016px;left:717.70px;">PLN1 400,00</span>
<svg style="left:1141.9px;top:789.9px" width="6" height="8" viewBox="0 0 6 8"><path d="M1.2 0.9 L4.5 4 L1.2 7.1" fill="none" stroke="#3c4043" stroke-width="1.7"/></svg>
<div class="hl" style="left:431px;top:840px;width:720px;background:#dadde3;"></div>
<span class="t" style="top:820.00px;font-size:10px;line-height:10px;color:#3c4043;letter-spacing:0.139px;left:440.60px;">17.11.2021</span>
<span class="t" style="top:820.00px;font-size:10px;line-height:10px;color:#3c4043;letter-spacing:0.121px;left:532.50px;">Jedzenie</span>
<span class="t" style="top:820.00px;font-size:10px;line-height:10px;color:#4a8fdd;letter-spacing:0.059px;left:607.80px;">Inne</span>
<span class="t" style="top:820.00px;font-size:10px;line-height:10px;color:#3c4043;letter-spacing:-0.060px;left:717.70px;">PLN47,00</span>
<svg style="left:1141.9px;top:819.9px" width="6" height="8" viewBox="0 0 6 8"><path d="M1.2 0.9 L4.5 4 L1.2 7.1" fill="none" stroke="#3c4043" stroke-width="1.7"/></svg>
<div class="hl" style="left:431px;top:870px;width:720px;background:#dadde3;"></div>
<span class="t" style="top:851.00px;font-size:10px;line-height:10px;color:#3c4043;letter-spacing:0.139px;left:440.60px;">16.11.2021</span>
<span class="t" style="top:851.00px;font-size:10px;line-height:10px;color:#3c4043;letter-spacing:-0.164px;left:532.50px;">Parking no…</span>
<span class="t" style="top:851.00px;font-size:10px;line-height:10px;color:#4a8fdd;letter-spacing:0.059px;left:607.80px;">Inne</span>
<span class="t" style="top:851.00px;font-size:10px;line-height:10px;color:#3c4043;letter-spacing:-0.060px;left:717.70px;">PLN44,00</span>
<svg style="left:1141.9px;top:850.9px" width="6" height="8" viewBox="0 0 6 8"><path d="M1.2 0.9 L4.5 4 L1.2 7.1" fill="none" stroke="#3c4043" stroke-width="1.7"/></svg>
<div class="a" style="left:523px;top:535px;width:6px;height:31px;background:linear-gradient(to right,rgba(0,0,0,0.10),rgba(0,0,0,0.03) 40%,rgba(0,0,0,0));"></div>
<div class="a" style="left:523px;top:598px;width:6px;height:275px;background:linear-gradient(to right,rgba(0,0,0,0.10),rgba(0,0,0,0.03) 40%,rgba(0,0,0,0));"></div>
<div class="a" style="left:1151px;top:536px;width:15px;height:337px;background:#f1f1f1;"></div><div class="a" style="left:1151px;top:553px;width:15px;height:18px;background:#c9c9c9;"></div><svg style="left:1153.9px;top:540.4px" width="10" height="7" viewBox="0 0 10 7"><path d="M1.3 6 L5 2.1 L8.7 6" fill="none" stroke="#4d4d4d" stroke-width="2.2"/></svg>
<svg style="left:1154.3px;top:861.8px" width="10" height="7" viewBox="0 0 10 7"><path d="M1.3 1 L5 4.9 L8.7 1" fill="none" stroke="#4d4d4d" stroke-width="2.2"/></svg>
<div class="a" style="left:431px;top:873px;width:735px;height:17px;background:#f1f1f1;"></div>
<div class="a" style="left:448px;top:873px;width:681px;height:17px;background:#c9c9c9;"></div>
<svg style="left:435px;top:876.5px" width="7" height="10" viewBox="0 0 7 10"><path d="M6 1.3 L2.1 5 L6 8.7" fill="none" stroke="#4d4d4d" stroke-width="2.2"/></svg>
<svg style="left:1139.5px;top:876.5px" width="7" height="10" viewBox="0 0 7 10"><path d="M1 1.3 L4.9 5 L1 8.7" fill="none" stroke="#4d4d4d" stroke-width="2.2"/></svg>
<div class="rs" style="left:1160px;top:883px;"></div>
<div class="a" style="left:1176px;top:567px;width:720px;height:31px;background:#f7f8fa;"></div>
<div class="a" style="left:1176px;top:689px;width:720px;height:31px;background:#f7f8fa;"></div>
<div class="a" style="left:1176px;top:810px;width:720px;height:31px;background:#f7f8fa;"></div>
<div class="a" style="left:1268px;top:842px;width:628px;height:28px;background:#f3f8fd;"></div>
<div class="hl" style="left:1176px;top:566px;width:720px;background:#d3d6dc;"></div>
<div class="vl" style="left:1344px;top:536px;height:30px;background:#e6e8eb;"></div>
<div class="vl" style="left:1486px;top:536px;height:30px;background:#e6e8eb;"></div>
<span class="t" style="top:546.00px;font-size:10px;line-height:10px;color:#202124;font-weight:bold;letter-spacing:-0.244px;left:1185.50px;">Data</span>
<span class="t" style="top:546.00px;font-size:10px;line-height:10px;color:#202124;font-weight:bold;letter-spacing:-0.212px;left:1278.50px;">Typ</span>
<span class="t" style="top:546.00px;font-size:10px;line-height:10px;color:#202124;font-weight:bold;letter-spacing:-0.239px;left:1354.50px;">Przychód</span>
<span class="t" style="top:546.00px;font-size:10px;line-height:10px;color:#202124;font-weight:bold;letter-spacing:-0.204px;left:1496.40px;">Przychód planowany</span>
<span class="t" style="top:546.00px;font-size:10px;line-height:10px;color:#202124;font-weight:bold;letter-spacing:-0.271px;left:1638.00px;">Odchylenie</span>
<span class="t" style="top:578.00px;font-size:10px;line-height:10px;color:#202124;font-weight:bold;letter-spacing:0.293px;left:1185.50px;">12/2021</span>
<div class="a" style="left:1234.2px;top:576.3px;width:70.8px;height:11.6px;border-radius:3px;background:#dcdee1;"></div>
<span class="t" style="top:578.00px;font-size:10px;line-height:10px;color:#3c4043;letter-spacing:0.105px;left:1237.40px;-webkit-text-stroke:0.4px #3c4043;">PLN15 058,00</span>
<span class="t" style="top:700.00px;font-size:10px;line-height:10px;color:#202124;font-weight:bold;letter-spacing:0.372px;left:1185.50px;">11/2021</span>
<div class="a" style="left:1234.2px;top:698.3px;width:65.0px;height:11.6px;border-radius:3px;background:#dcdee1;"></div>
<span class="t" style="top:700.00px;font-size:10px;line-height:10px;color:#3c4043;letter-spacing:0.093px;left:1237.40px;-webkit-text-stroke:0.4px #3c4043;">PLN8 508,00</span>
<span class="t" style="top:821.00px;font-size:10px;line-height:10px;color:#202124;font-weight:bold;letter-spacing:0.293px;left:1185.50px;">10/2021</span>
<div class="a" style="left:1234.2px;top:819.3px;width:70.8px;height:11.6px;border-radius:3px;background:#dcdee1;"></div>
<span class="t" style="top:821.00px;font-size:10px;line-height:10px;color:#3c4043;letter-spacing:0.105px;left:1237.40px;-webkit-text-stroke:0.4px #3c4043;">PLN23 220,00</span>
<div class="hl" style="left:1268px;top:627px;width:628px;background:#dadde3;"></div>
<span class="t" style="top:608.00px;font-size:10px;line-height:10px;color:#3c4043;letter-spacing:0.129px;left:1185.50px;">11.12.2021</span>
<span class="t" style="top:608.00px;font-size:10px;line-height:10px;color:#4a8fdd;letter-spacing:-0.154px;left:1277.40px;">Event</span>
<span class="t" style="top:608.00px;font-size:10px;line-height:10px;color:#3c4043;letter-spacing:0.018px;left:1353.40px;">PLN916,00</span>
<svg style="left:1883px;top:607.9px" width="6" height="8" viewBox="0 0 6 8"><path d="M1.2 0.9 L4.5 4 L1.2 7.1" fill="none" stroke="#3c4043" stroke-width="1.7"/></svg>
<div class="hl" style="left:1268px;top:657px;width:628px;background:#dadde3;"></div>
<span class="t" style="top:638.00px;font-size:10px;line-height:10px;color:#3c4043;letter-spacing:0.129px;left:1185.50px;">11.12.2021</span>
<span class="t" style="top:638.00px;font-size:10px;line-height:10px;color:#4a8fdd;letter-spacing:-0.154px;left:1277.40px;">Event</span>
<span class="t" style="top:638.00px;font-size:10px;line-height:10px;color:#3c4043;letter-spacing:0.029px;left:1353.40px;">PLN5 090,00</span>
<svg style="left:1883px;top:637.9px" width="6" height="8" viewBox="0 0 6 8"><path d="M1.2 0.9 L4.5 4 L1.2 7.1" fill="none" stroke="#3c4043" stroke-width="1.7"/></svg>
<div class="hl" style="left:1176px;top:688px;width:720px;background:#dadde3;"></div>
<span class="t" style="top:668.00px;font-size:10px;line-height:10px;color:#3c4043;letter-spacing:0.129px;left:1185.50px;">11.12.2021</span>
<span class="t" style="top:668.00px;font-size:10px;line-height:10px;color:#4a8fdd;letter-spacing:-0.154px;left:1277.40px;">Event</span>
<span class="t" style="top:668.00px;font-size:10px;line-height:10px;color:#3c4043;letter-spacing:0.029px;left:1353.40px;">PLN9 052,00</span>
<svg style="left:1883px;top:667.9px" width="6" height="8" viewBox="0 0 6 8"><path d="M1.2 0.9 L4.5 4 L1.2 7.1" fill="none" stroke="#3c4043" stroke-width="1.7"/></svg>
<div class="hl" style="left:1176px;top:719px;width:720px;background:#dadde3;"></div>
<div class="hl" style="left:1268px;top:748px;width:628px;background:#dadde3;"></div>
<span class="t" style="top:730.00px;font-size:10px;line-height:10px;color:#3c4043;letter-spacing:0.203px;left:1185.50px;">11.11.2021</span>
<span class="t" style="top:730.00px;font-size:10px;line-height:10px;color:#4a8fdd;letter-spacing:-0.154px;left:1277.40px;">Event</span>
<span class="t" style="top:730.00px;font-size:10px;line-height:10px;color:#3c4043;letter-spacing:0.029px;left:1353.40px;">PLN4 542,00</span>
<svg style="left:1883px;top:729.9px" width="6" height="8" viewBox="0 0 6 8"><path d="M1.2 0.9 L4.5 4 L1.2 7.1" fill="none" stroke="#3c4043" stroke-width="1.7"/></svg>
<div class="hl" style="left:1176px;top:779px;width:720px;background:#dadde3;"></div>
<span class="t" style="top:759.00px;font-size:10px;line-height:10px;color:#3c4043;letter-spacing:0.203px;left:1185.50px;">11.11.2021</span>
<span class="t" style="top:759.00px;font-size:10px;line-height:10px;color:#4a8fdd;letter-spacing:-0.154px;left:1277.40px;">Event</span>
<span class="t" style="top:759.00px;font-size:10px;line-height:10px;color:#3c4043;letter-spacing:0.018px;left:1353.40px;">PLN699,00</span>
<svg style="left:1883px;top:758.9px" width="6" height="8" viewBox="0 0 6 8"><path d="M1.2 0.9 L4.5 4 L1.2 7.1" fill="none" stroke="#3c4043" stroke-width="1.7"/></svg>
<div class="hl" style="left:1268px;top:809px;width:628px;background:#dadde3;"></div>
<span class="t" style="top:790.00px;font-size:10px;line-height:10px;color:#3c4043;letter-spacing:0.203px;left:1185.50px;">11.11.2021</span>
<span class="t" style="top:790.00px;font-size:10px;line-height:10px;color:#4a8fdd;letter-spacing:-0.154px;left:1277.40px;">Event</span>
<span class="t" style="top:790.00px;font-size:10px;line-height:10px;color:#3c4043;letter-spacing:0.029px;left:1353.40px;">PLN3 267,00</span>
<svg style="left:1883px;top:789.9px" width="6" height="8" viewBox="0 0 6 8"><path d="M1.2 0.9 L4.5 4 L1.2 7.1" fill="none" stroke="#3c4043" stroke-width="1.7"/></svg>
<div class="hl" style="left:1176px;top:841px;width:720px;background:#dadde3;"></div>
<div class="hl" style="left:1268px;top:870px;width:628px;background:#dadde3;"></div>
<span class="t" style="top:852.00px;font-size:10px;line-height:10px;color:#3c4043;letter-spacing:0.129px;left:1185.50px;">11.10.2021</span>
<span class="t" style="top:852.00px;font-size:10px;line-height:10px;color:#4a8fdd;letter-spacing:-0.154px;left:1277.40px;">Event</span>
<span class="t" style="top:852.00px;font-size:10px;line-height:10px;color:#3c4043;letter-spacing:0.029px;left:1353.40px;">PLN5 293,00</span>
<svg style="left:1883px;top:851.9px" width="6" height="8" viewBox="0 0 6 8"><path d="M1.2 0.9 L4.5 4 L1.2 7.1" fill="none" stroke="#3c4043" stroke-width="1.7"/></svg>
<div class="hl" style="left:1268px;top:900px;width:628px;background:#dadde3;"></div>
<span class="t" style="top:881.00px;font-size:10px;line-height:10px;color:#3c4043;letter-spacing:0.129px;left:1185.50px;">11.10.2021</span>
<span class="t" style="top:881.00px;font-size:10px;line-height:10px;color:#4a8fdd;letter-spacing:-0.154px;left:1277.40px;">Event</span>
<span class="t" style="top:881.00px;font-size:10px;line-height:10px;color:#3c4043;letter-spacing:0.029px;left:1353.40px;">PLN8 875,00</span>
<svg style="left:1883px;top:880.9px" width="6" height="8" viewBox="0 0 6 8"><path d="M1.2 0.9 L4.5 4 L1.2 7.1" fill="none" stroke="#3c4043" stroke-width="1.7"/></svg>
<div class="a" style="left:1268px;top:535px;width:6px;height:31px;background:linear-gradient(to right,rgba(0,0,0,0.10),rgba(0,0,0,0.03) 40%,rgba(0,0,0,0));"></div>
<div class="a" style="left:1268px;top:598px;width:6px;height:91px;background:linear-gradient(to right,rgba(0,0,0,0.10),rgba(0,0,0,0.03) 40%,rgba(0,0,0,0));"></div>
<div class="a" style="left:1268px;top:720px;width:6px;height:90px;background:linear-gradient(to right,rgba(0,0,0,0.10),rgba(0,0,0,0.03) 40%,rgba(0,0,0,0));"></div>
<div class="a" style="left:1268px;top:842px;width:6px;height:49px;background:linear-gradient(to right,rgba(0,0,0,0.10),rgba(0,0,0,0.03) 40%,rgba(0,0,0,0));"></div>
<div class="a" style="left:1896px;top:536px;width:15px;height:354px;background:#f1f1f1;"></div><div class="a" style="left:1896px;top:553px;width:15px;height:94px;background:#c9c9c9;"></div><svg style="left:1898.9px;top:540.4px" width="10" height="7" viewBox="0 0 10 7"><path d="M1.3 6 L5 2.1 L8.7 6" fill="none" stroke="#4d4d4d" stroke-width="2.2"/></svg>
<svg style="left:1899.4px;top:879.8px" width="10" height="7" viewBox="0 0 10 7"><path d="M1.3 1 L5 4.9 L8.7 1" fill="none" stroke="#4d4d4d" stroke-width="2.2"/></svg>
<div class="rs" style="left:1906px;top:883px;"></div>
<div class="a" style="left:1177px;top:891px;width:734px;height:1px;background:#dcdfe5;"></div>
<div class="a" style="left:1170px;top:892px;width:749px;height:6px;background:#f7f8fa;"></div>
<div class="a" style="left:0;top:898px;width:1919px;height:1px;background:#fff;"></div><div class="a" style="left:0;top:899px;width:1919px;height:1px;background:#000;"></div>
</div></body></html>
